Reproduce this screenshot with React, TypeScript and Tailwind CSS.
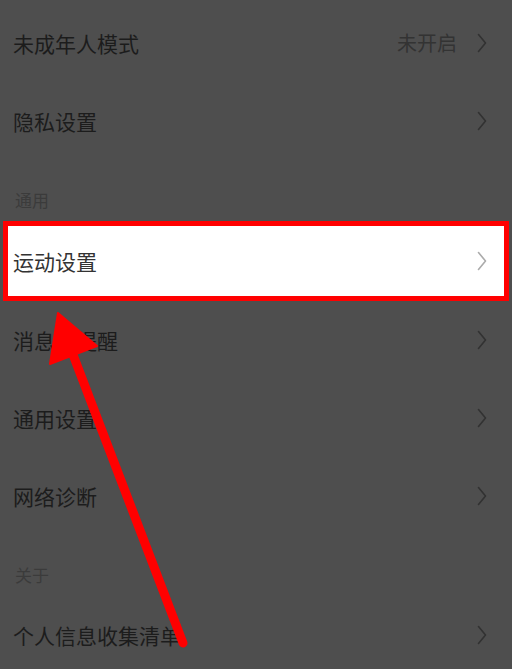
import React from 'react';

const font = { fontFamily: '"Noto Sans CJK SC", "Noto Sans", sans-serif' };

const Chevron = ({ light }: { light?: boolean }) => (
  <svg width="10" height="20" viewBox="0 0 10 20" fill="none" className="shrink-0">
    <path
      d="M1.5 1.5 L8.5 10 L1.5 18.5"
      stroke={light ? '#ababab' : '#323232'}
      strokeWidth="1.6"
      strokeLinecap="round"
      strokeLinejoin="round"
    />
  </svg>
);

const Row = ({ label, value }: { label: string; value?: string }) => (
  <div className="h-[78px] flex items-center justify-between pl-[13px] pr-[25px]">
    <span className="text-[21px] leading-[24px] text-[#1c1c1c]">{label}</span>
    <div className="flex items-center gap-[20px]">
      {value && <span className="text-[20px] leading-[24px] text-[#333333]">{value}</span>}
      <Chevron />
    </div>
  </div>
);

const Section = ({ title }: { title: string }) => (
  <div className="h-[61px] pl-[15px] pt-[28px]">
    <span className="text-[17px] leading-[22px] text-[#3b3b3b]">{title}</span>
  </div>
);

export default function App() {
  return (
    <div className="relative w-[512px] h-[669px] overflow-hidden bg-[#4e4e4e]" style={font}>
      <div className="pt-[4px]">
        <Row label="未成年人模式" value="未开启" />
        <Row label="隐私设置" />
        <Section title="通用" />

        {/* highlighted row */}
        <div className="h-[80px] mx-[3px] border-[5px] border-[#ff0000] bg-white flex items-center justify-between pl-[5px] pr-[17px]">
          <span className="text-[21px] leading-[24px] text-[#333333]">运动设置</span>
          <Chevron light />
        </div>

        <Row label="消息与提醒" />
        <Row label="通用设置" />
        <Row label="网络诊断" />
        <Section title="关于" />
        <Row label="个人信息收集清单" />
      </div>

      {/* annotation arrow */}
      <svg className="absolute inset-0 pointer-events-none" width="512" height="669" viewBox="0 0 512 669">
        <line x1="72" y1="352" x2="183" y2="643" stroke="#ff0000" strokeWidth="9" strokeLinecap="round" />
        <polygon points="58,313 50,364 97,346" fill="#ff0000" stroke="#ff0000" strokeWidth="2" strokeLinejoin="round" />
      </svg>
    </div>
  );
}
